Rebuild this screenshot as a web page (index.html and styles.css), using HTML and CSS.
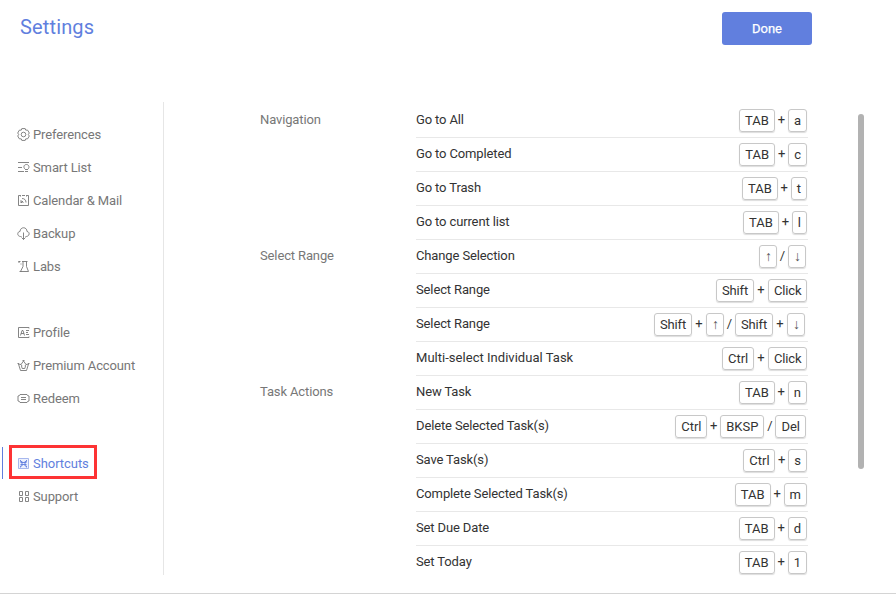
FILE: index.html
```
<!DOCTYPE html>
<html lang="en">
<head>
<meta charset="utf-8">
<title>Settings</title>
<link rel="stylesheet" href="styles.css">
</head>
<body>
<div class="page">
  <header class="header">
    <h1 class="title">Settings</h1>
    <button class="done">Done</button>
  </header>
  <div class="main">
    <nav class="sidebar">
      <div class="group">
        <a class="item"><svg class="icon" viewBox="0 0 13 13"><path d="M4.800.6h3.400l.5 1.500 2 .1 1.600 2.800-1 1.500 1 1.500-1.600 2.800-2 .1-.5 1.500H4.800l-.5-1.500-2-.1L.7 8l1-1.500-1-1.500 1.600-2.800 2-.1z"/><circle cx="6.500" cy="6.500" r="2.300"/></svg>Preferences</a>
        <a class="item"><svg class="icon" viewBox="0 0 13 13"><path d="M1 1.500h11M1 6.500h4M1 10.500h6M8 10.500h3M8 8.500h3M8 8C6.100 6.500 6.800 3.500 9.400 3.500S12.800 6.500 11 8"/></svg>Smart List</a>
        <a class="item"><svg class="icon" viewBox="0 0 13 13"><path d="M3 1.500H1.500v10h10v-10H10M5 1.500h3M3.500 1v1.500M9.500 1v1.500M5 4.500c2.500 0 4 1.500 4 4M4 9V6.500L6.500 9M4 9l2-2"/></svg>Calendar &amp; Mail</a>
        <a class="item"><svg class="icon" viewBox="0 0 13 13"><path d="M4.500 9.500H3.500C-.3 9.200.2 4.500 3 4.500 3.200-.5 10-.5 10 4.500c3 .2 3 4.800-.8 5h-.7M6.500 5.500v7M4.500 10.500l2 2 2-2"/></svg>Backup</a>
        <a class="item"><svg class="icon" viewBox="0 0 13 13"><path d="M5 1.500h5.500M6 1.500v5L3.500 11.500h8L9.500 6.500v-5M1.500 1.500h2M2 1v2M4 3.500v1M2.500 11.500h2"/></svg>Labs</a>
      </div>
      <div class="group">
        <a class="item"><svg class="icon" viewBox="0 0 13 13"><path d="M12 2.500v-1H1.500v10H12v-1M3.500 9.500l1.500-5h1l1.500 5M4 7.500h3M9 4.500h3M9 6.500h2M9 8.500h3"/></svg>Profile</a>
        <a class="item"><svg class="icon" viewBox="0 0 13 13"><path d="M3.500 11.500L1.500 5l2.500.5L6.500 2 9 5.500l2.500-.5-2 6.500zM4.500 7l.7 2.500h2.600L8.500 7M5.500 1.500h2M.5 4.500h1.500M11 4.500h1.500M4 5.500l1 1.500M9 5.500L8 7"/></svg>Premium Account</a>
        <a class="item"><svg class="icon" viewBox="0 0 13 13"><path d="M3 2.500h7l.5 1 1.500.5v5l-1.500.5-.5 1H3l-.5-1L1 9V4l1.500-.5zM4 5.500h5M4 7.500h5"/></svg>Redeem</a>
      </div>
      <div class="group">
        <a class="item active"><svg class="icon" viewBox="0 0 13 13"><path class="pale" d="M1.500 1.500h10v10h-10z"/><path d="M3.500 3v1.500H5V9H3.500v1.500M9.500 3v1.500H8V9h1.500v1.500M3.500 5.500h6M3.500 7.500h6"/></svg>Shortcuts</a>
        <a class="item"><svg class="icon" viewBox="0 0 13 13"><path d="M2.500 1.500h3v4h-3zM8.500 1.500h3v4h-3zM2.500 7.500h3v4h-3zM8.500 7.500h3v4h-3z"/></svg>Support</a>
      </div>
    </nav>
    <main class="content">
      <section class="section">
        <h2 class="label">Navigation</h2>
        <div class="rows">
          <div class="row">Go to All<span class="keys"><kbd>TAB</kbd><i>+</i><kbd>a</kbd></span></div>
          <div class="row">Go to Completed<span class="keys"><kbd>TAB</kbd><i>+</i><kbd>c</kbd></span></div>
          <div class="row">Go to Trash<span class="keys"><kbd>TAB</kbd><i>+</i><kbd>t</kbd></span></div>
          <div class="row">Go to current list<span class="keys"><kbd>TAB</kbd><i>+</i><kbd>l</kbd></span></div>
        </div>
      </section>
      <section class="section">
        <h2 class="label">Select Range</h2>
        <div class="rows">
          <div class="row">Change Selection<span class="keys inset"><kbd class="arrow">↑</kbd><i class="slash">/</i><kbd class="arrow">↓</kbd></span></div>
          <div class="row">Select Range<span class="keys"><kbd class="shift">Shift</kbd><i class="wide">+</i><kbd class="click">Click</kbd></span></div>
          <div class="row">Select Range<span class="keys inset-more"><kbd class="shift">Shift</kbd><i class="wide">+</i><kbd class="arrow">↑</kbd><i class="slash">/</i><kbd class="shift">Shift</kbd><i class="wide">+</i><kbd class="arrow">↓</kbd></span></div>
          <div class="row loose">Multi-select Individual Task<span class="keys"><kbd class="ctrl">Ctrl</kbd><i class="wide">+</i><kbd class="click">Click</kbd></span></div>
        </div>
      </section>
      <section class="section">
        <h2 class="label">Task Actions</h2>
        <div class="rows">
          <div class="row">New Task<span class="keys"><kbd>TAB</kbd><i>+</i><kbd>n</kbd></span></div>
          <div class="row">Delete Selected Task(s)<span class="keys inset"><kbd class="ctrl">Ctrl</kbd><i>+</i><kbd>BKSP</kbd><i class="slash">/</i><kbd>Del</kbd></span></div>
          <div class="row">Save Task(s)<span class="keys"><kbd class="ctrl">Ctrl</kbd><i>+</i><kbd>s</kbd></span></div>
          <div class="row">Complete Selected Task(s)<span class="keys"><kbd>TAB</kbd><i>+</i><kbd>m</kbd></span></div>
          <div class="row">Set Due Date<span class="keys"><kbd>TAB</kbd><i>+</i><kbd>d</kbd></span></div>
          <div class="row">Set Today<span class="keys"><kbd>TAB</kbd><i>+</i><kbd>1</kbd></span></div>
        </div>
      </section>
    </main>
    <div class="scrollbar"></div>
  </div>
</div>
</body>
</html>
```
FILE: styles.css
```
*, *::before, *::after { box-sizing: border-box; }
body { margin: 0; background: #fff; font: 13px/20px Roboto, sans-serif; color: #333; overflow: hidden; }
.page { height: 594px; border-bottom: 1px solid #d4d4d4; }
.header { height: 102px; padding: 12px 84px 0 20px; display: flex; justify-content: space-between; align-items: flex-start; }
.title { margin: 0; font-size: 20px; line-height: 30px; font-weight: 400; color: #617fde; letter-spacing: .15px; }
.done { width: 90px; height: 33px; border: 0; border-radius: 3px; background: #617fde; color: #fff; font: 400 13px/33px Roboto, sans-serif; padding: 0; -webkit-text-stroke: .25px #fff; }
.main { display: flex; height: 473px; }
.sidebar { width: 164px; border-right: 1px solid #e6e6e6; padding-top: 16px; }
.group { margin-bottom: 33px; }
.group + .group + .group { margin-top: -1px; }
.item { display: flex; align-items: center; height: 33px; padding-left: 17px; gap: 3px; color: #777; letter-spacing: -.12px; }
.icon { width: 13px; height: 13px; fill: none; stroke: currentColor; stroke-width: .9; }
.active { color: #617fde; position: relative; letter-spacing: -.05px; }
.active::before { content: ""; position: absolute; left: 2px; top: 0; width: 1px; height: 32px; background: #617fde; }
.active::after { content: ""; position: absolute; left: 9px; top: -2px; width: 88px; height: 34px; border: 3px solid #fd3334; }
.pale { stroke: #9dafeb; fill: #edf1fd; }
.content { width: 644px; padding: 2px 0 0 96px; }
.section { display: flex; }
.label { width: 156px; margin: 0; padding-top: 6px; font: inherit; color: #777; letter-spacing: -.13px; }
.rows { width: 392px; }
.row { height: 34px; padding: 6px 0 0; border-bottom: 1px solid #e8e8e8; display: flex; justify-content: space-between; letter-spacing: -.13px; }
.loose { letter-spacing: .03px; }
.section:last-child .row:last-child { border: 0; }
.keys { display: flex; padding-right: 1px; margin-top: -1px; letter-spacing: 0; }
.inset { padding-right: 2px; }
.inset-more { padding-right: 3px; }
kbd { height: 23px; min-width: 15px; padding: 0 5px; border: 1px solid #c8c8c8; border-radius: 3px; box-shadow: 0 1px 1px #ddd; font: 13px/22px Roboto, sans-serif; text-align: center; }
.shift { width: 38px; letter-spacing: -.15px; }
.click { width: 39px; letter-spacing: -.15px; }
.ctrl { width: 32px; }
.arrow { width: 18px; font-family: "Liberation Sans", sans-serif; font-size: 14px; line-height: 20px; color: #555; }
i { font-style: normal; width: 13px; line-height: 22px; text-align: center; }
.wide { width: 14px; }
.slash { width: 11px; }
.scrollbar { width: 6px; height: 355px; margin: 12px 0 0 50px; border-radius: 3px; background: #b2b2b2; }
```
